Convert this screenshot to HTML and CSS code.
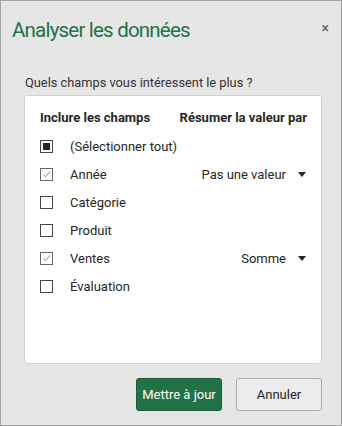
FILE: index.html
```html
<!DOCTYPE html>
<html lang="fr">
<head>
  <meta charset="UTF-8" />
  <meta name="viewport" content="width=device-width, initial-scale=1.0" />
  <title>Analyser les données</title>
  <link rel="stylesheet" href="styles.css">
</head>
<body>
  <div class="dialog">
    <div class="dialog-header">
      <div class="dialog-title">Analyser les données</div>
      <span class="close-btn">×</span>
    </div>
    <div class="question">Quels champs vous intéressent le plus ?</div>

    <div class="fields-panel">
      <div class="fields-head">
        <span>Inclure les champs</span>
        <span>Résumer la valeur par</span>
      </div>

      <div class="field-row">
        <span class="check mixed"></span>
        <span class="field-name">(Sélectionner tout)</span>
      </div>
      <div class="field-row">
        <span class="check checked">
          <svg viewBox="0 0 12 12" width="12" height="12"><path d="M2.5 6.5 L5 9 L10 3" fill="none" stroke="#6e7f95" stroke-width="1"/></svg>
        </span>
        <span class="field-name">Année</span>
        <span class="summary">Pas une valeur <span class="caret"></span></span>
      </div>
      <div class="field-row">
        <span class="check"></span>
        <span class="field-name">Catégorie</span>
      </div>
      <div class="field-row">
        <span class="check"></span>
        <span class="field-name">Produit</span>
      </div>
      <div class="field-row">
        <span class="check checked">
          <svg viewBox="0 0 12 12" width="12" height="12"><path d="M2.5 6.5 L5 9 L10 3" fill="none" stroke="#6e7f95" stroke-width="1"/></svg>
        </span>
        <span class="field-name">Ventes</span>
        <span class="summary">Somme <span class="caret"></span></span>
      </div>
      <div class="field-row">
        <span class="check"></span>
        <span class="field-name">Évaluation</span>
      </div>
    </div>

    <div class="dialog-buttons">
      <button class="btn primary">Mettre à jour</button>
      <button class="btn">Annuler</button>
    </div>
  </div>
</body>
</html>
```

FILE: styles.css
```css
html, body {
  margin: 0;
  padding: 0;
  background-color: #e6e6e6;
  font-family: Roboto, "Open Sans", sans-serif;
  color: #262626;
}

.dialog {
  box-sizing: border-box;
  width: 342px;
  height: 426px;
  border: 1px solid #a3a3a3;
  background-color: #e6e6e6;
  display: flex;
  flex-direction: column;
}

.dialog-header {
  display: flex;
  align-items: center;
  justify-content: space-between;
  padding: 12px 12px 0 11px;
  height: 34px;
}

.dialog-title {
  font-size: 20.5px;
  letter-spacing: -0.8px;
  color: #217346;
}

.close-btn {
  font-size: 14px;
  color: #555;
  margin-top: -4px;
}

.question {
  font-size: 12.8px;
  margin: 27px 0 0 24px;
  line-height: 18px;
  color: #333;
}

.fields-panel {
  box-sizing: border-box;
  margin: 3px 0 0 23px;
  width: 298px;
  height: 269px;
  background-color: #fff;
  border: 1px solid #d2d2d2;
  border-radius: 3px;
  padding: 12px 14px 0 15px;
}

.fields-head {
  display: flex;
  justify-content: space-between;
  font-size: 13px;
  font-weight: 700;
  line-height: 20px;
  margin-bottom: 4px;
}

.field-row {
  display: flex;
  align-items: center;
  height: 28px;
  font-size: 13px;
}

.check {
  box-sizing: border-box;
  width: 13px;
  height: 13px;
  border: 1px solid #444;
  margin-right: 17px;
  display: flex;
  align-items: center;
  justify-content: center;
  flex-shrink: 0;
}

.check.checked { border-color: #666; }

.check.mixed::after {
  content: "";
  width: 7px;
  height: 7px;
  background-color: #262626;
}

.field-name { flex: 1; }

.summary {
  display: flex;
  align-items: center;
}

.caret {
  display: inline-block;
  width: 0;
  height: 0;
  border-left: 4.5px solid transparent;
  border-right: 4.5px solid transparent;
  border-top: 5px solid #262626;
  margin-left: 12px;
  margin-right: 1px;
}

.dialog-buttons {
  display: flex;
  justify-content: flex-end;
  gap: 14px;
  padding: 14px 19px 0 0;
}

.btn {
  width: 86px;
  height: 33px;
  font-family: Roboto, "Open Sans", sans-serif;
  font-size: 13px;
  border: 1px solid #ababab;
  border-radius: 3px;
  background-color: #ececec;
  color: #262626;
  padding: 0;
}

.btn.primary {
  background-color: #217346;
  border-color: #1b5e3a;
  color: #fff;
}
```
